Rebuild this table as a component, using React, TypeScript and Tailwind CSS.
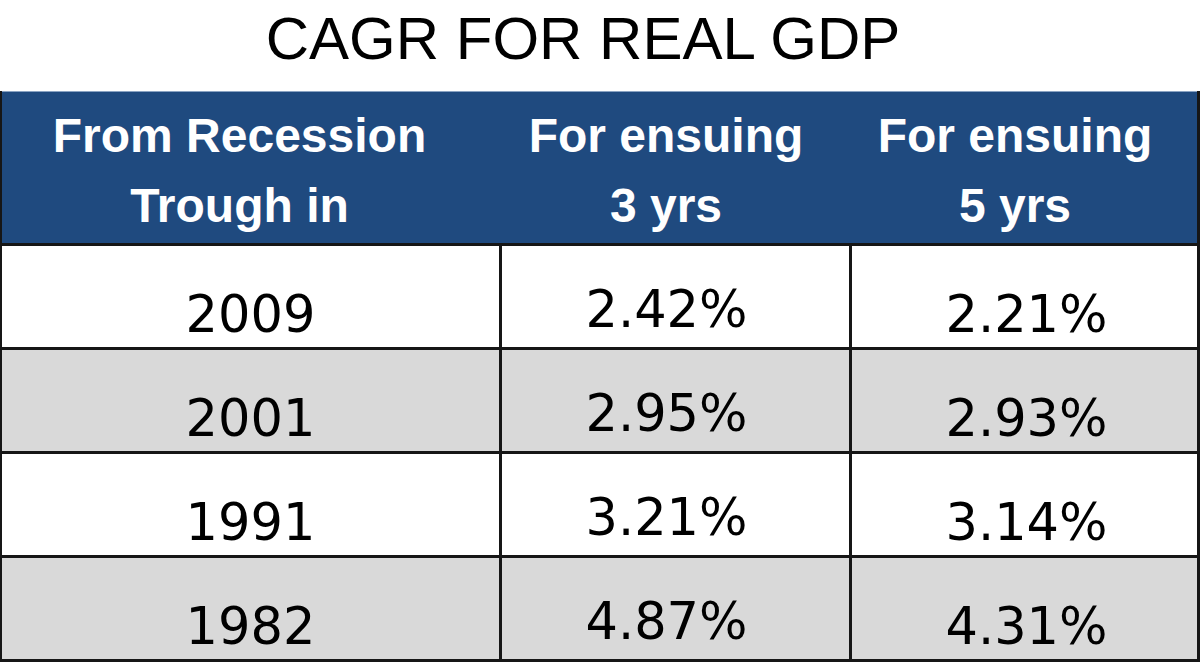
import React from "react";

const rows = [
  { year: "2009", three: "2.42%", five: "2.21%", shaded: false },
  { year: "2001", three: "2.95%", five: "2.93%", shaded: true },
  { year: "1991", three: "3.21%", five: "3.14%", shaded: false },
  { year: "1982", three: "4.87%", five: "4.31%", shaded: true },
];

export default function App() {
  return (
    <div className="w-[1200px] h-[663px] bg-white overflow-hidden">
      {/* Title */}
      <div className="h-[91px] pt-[9px] pr-[34px] text-center text-[60px] leading-none text-black font-['Liberation_Sans',Arial,sans-serif]">
        CAGR FOR REAL GDP
      </div>

      {/* Table */}
      <div className="border-l-2 border-r-[3px] border-[#161616]">
        {/* Header */}
        <div className="grid grid-cols-[497px_350px_348px] h-[155px] bg-[#1f4a7f] border-t border-t-[#8aa3c2] border-b-[3px] border-b-[#161616] text-white font-bold text-[48px] leading-[70px] font-['Liberation_Sans',Arial,sans-serif]">
          <div className="pt-[9px] pr-[22px] text-center">
            From Recession
            <br />
            Trough in
          </div>
          <div className="pt-[9px] pr-[16px] text-center">
            For ensuing
            <br />3 yrs
          </div>
          <div className="pt-[9px] pr-[16px] text-center">
            For ensuing
            <br />5 yrs
          </div>
        </div>

        {/* Body */}
        {rows.map((r) => (
          <div
            key={r.year}
            className={`grid grid-cols-[497px_350px_348px] h-[104px] border-b-[3px] border-[#161616] text-black text-[51px] leading-[59px] font-['DejaVu_Sans',Verdana,sans-serif] ${
              r.shaded ? "bg-[#d9d9d9]" : "bg-white"
            }`}
          >
            <div className="pt-[39px] text-center">{r.year}</div>
            <div className="pt-[34px] pr-[18px] text-center border-l-[3px] border-[#161616]">
              {r.three}
            </div>
            <div className="pt-[39px] pl-[4px] text-center border-l-[3px] border-[#161616]">
              {r.five}
            </div>
          </div>
        ))}
      </div>
    </div>
  );
}
